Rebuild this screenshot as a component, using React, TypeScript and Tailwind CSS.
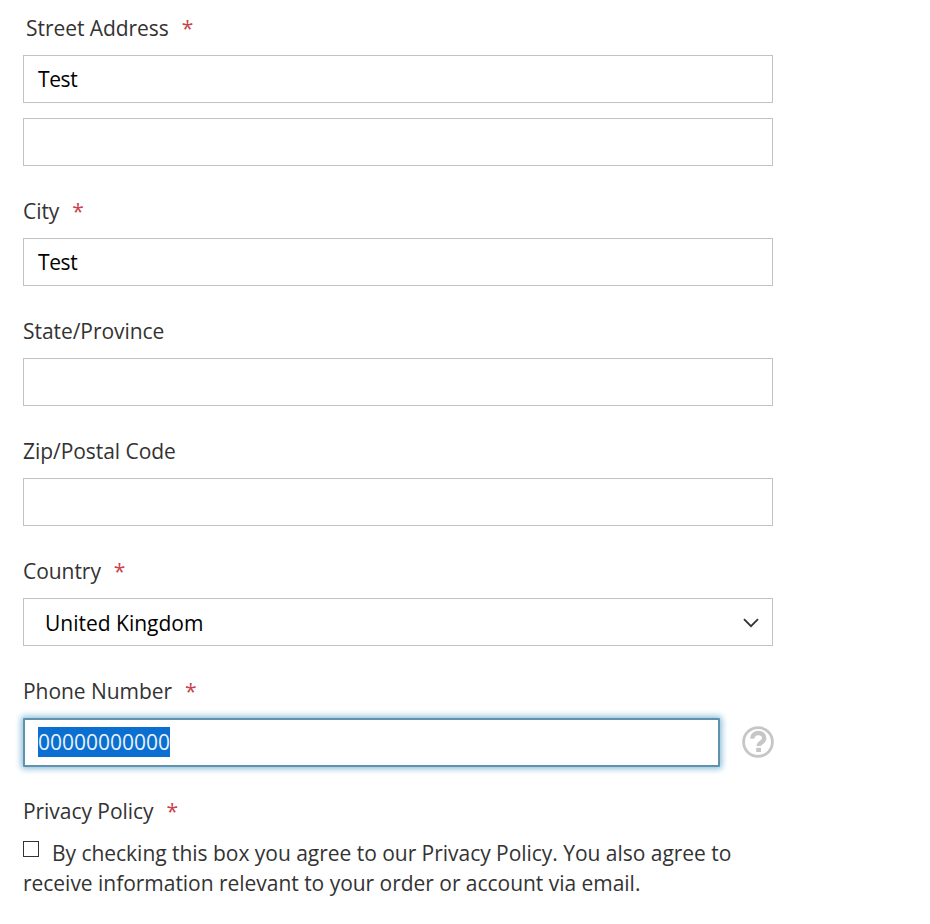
const Star = () => <span className="ml-[13px] text-[#c9424c]">*</span>;

function Label({ text, req, className = "" }: { text: string; req?: boolean; className?: string }) {
  return (
    <div className={`h-[30px] pt-[1px] text-[21px] leading-[30px] tracking-[-0.05px] text-[#333333] ${className}`}>
      {text}
      {req && <Star />}
    </div>
  );
}

function Box({ value, className = "" }: { value?: string; className?: string }) {
  return (
    <div className={`h-[48px] w-[750px] border border-[#c2c2c2] bg-white pl-[14px] text-[21px] leading-[47px] tracking-[-0.4px] text-black ${className}`}>
      {value}
    </div>
  );
}

function Field({ label, req, value }: { label: string; req?: boolean; value?: string }) {
  return (
    <div className="mb-[29px]">
      <Label text={label} req={req} className="mb-[13px]" />
      <Box value={value} />
    </div>
  );
}

export default function App() {
  return (
    <div className="h-[924px] w-[930px] overflow-hidden bg-white pl-[23px] pt-[12px] font-['Open_Sans',sans-serif]">
      <div className="mb-[29px]">
        <Label text="Street Address" req className="mb-[13px] pl-[3px]" />
        <Box value="Test" className="mb-[15px]" />
        <Box />
      </div>
      <Field label="City" req value="Test" />
      <Field label="State/Province" />
      <Field label="Zip/Postal Code" />
      <div className="mb-[29px]">
        <Label text="Country" req className="mb-[13px]" />
        <div className="flex h-[48px] w-[750px] items-center justify-between border border-[#c2c2c2] bg-white pl-[21px] pr-[13px] text-[21px] text-black">
          <span className="pt-[4px]">United Kingdom</span>
          <svg className="mt-[2px]" width="16" height="10" viewBox="0 0 16 10" fill="none" stroke="#333333" strokeWidth="1.8">
            <path d="M1 1.2 L8 8.2 L15 1.2" />
          </svg>
        </div>
      </div>
      <div className="mb-[28px]">
        <Label text="Phone Number" req className="mb-[13px]" />
        <div className="flex items-center gap-[22px]">
          <div className="flex h-[49px] w-[697px] items-center rounded-[1px] border-2 border-[#5f93ad] bg-white pb-[2px] pl-[13px] text-[21px] shadow-[0_0_6px_2px_#8fc0dc]">
            <span className="h-[30px] bg-[#0a6fd0] leading-[30px] text-[#e8f2fb]">00000000000</span>
          </div>
          <svg className="mb-[2px]" width="32" height="32" viewBox="0 0 32 32" fill="none">
            <circle cx="16" cy="16" r="14.4" stroke="#c6c6c6" strokeWidth="2.8" />
            <path d="M10.2 12.6 C10.4 9 13 7 16.2 7 C19.9 7 22.2 9.1 22.2 12.2 C22.2 14.4 20.8 15.5 19.2 16.6 C17.8 17.5 16.6 18 16.6 20" stroke="#c6c6c6" strokeWidth="4.4" />
            <rect x="14.2" y="21.8" width="4.8" height="4.2" fill="#c6c6c6" />
          </svg>
        </div>
      </div>
      <Label text="Privacy Policy" req className="mb-[13px]" />
      <div className="w-[750px] text-[21px] leading-[30px] tracking-[-0.03px] text-[#333333]">
        <span className="relative top-[-6px] mr-[13px] inline-block h-[16px] w-[16px] border border-[#333333] align-middle" />
        By checking this box you agree to our Privacy Policy. You also agree to receive information relevant to your order or account via email.
      </div>
    </div>
  );
}
